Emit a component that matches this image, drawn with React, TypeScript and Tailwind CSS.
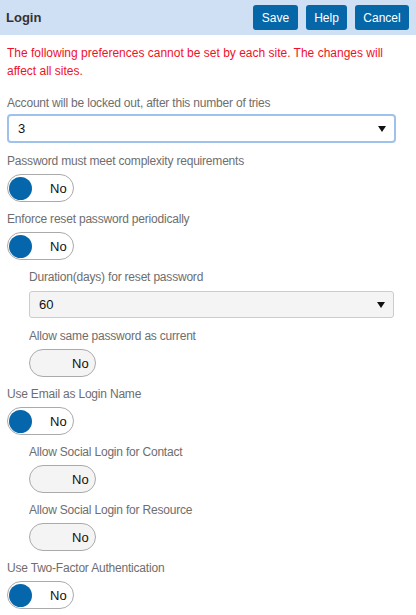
import React from "react";

const Arrow = () => (
  <svg width="8" height="6" viewBox="0 0 8 6" className="shrink-0">
    <path d="M0 0 L8 0 L4 6 Z" fill="#111" />
  </svg>
);

const Toggle = ({ knob }: { knob: boolean }) => (
  <div
    className={`relative flex h-[28px] w-[67px] items-center rounded-full border border-[#aaaaaa] ${
      knob ? "bg-white" : "bg-[#f4f4f4]"
    }`}
  >
    {knob && <div className="absolute left-[1px] top-[2px] h-[23px] w-[23px] rounded-full bg-[#0566ab]" />}
    <span className="absolute left-[42px] text-[13px] leading-none text-[#111]">No</span>
  </div>
);

const Label = ({ children }: { children: React.ReactNode }) => (
  <div className="h-[16px] text-[12px] leading-[16px] tracking-[-0.2px] text-[#6e6e6e]">{children}</div>
);

const ToggleBlock = ({ label, knob }: { label: string; knob: boolean }) => (
  <div className="flex flex-col pb-[9px]">
    <Label>{label}</Label>
    <div className="mt-[5px]">
      <Toggle knob={knob} />
    </div>
  </div>
);

export default function App() {
  return (
    <div
      className="h-[615px] w-[416px] overflow-hidden bg-white"
      style={{ fontFamily: '"Liberation Sans", Arial, sans-serif' }}
    >
      <div className="flex h-[35px] items-center justify-between bg-[#cfe0f5] pl-[6px] pr-[7px]">
        <div className="text-[13px] font-bold text-[#333]">Login</div>
        <div className="flex gap-[8px]">
          <button className="h-[25px] w-[45px] rounded-[3px] bg-[#0566a8] text-[12px] text-white">Save</button>
          <button className="h-[25px] w-[41px] rounded-[3px] bg-[#0566a8] text-[12px] text-white">Help</button>
          <button className="h-[25px] w-[54px] rounded-[3px] bg-[#0566a8] text-[12px] text-white">Cancel</button>
        </div>
      </div>
      <div className="px-[7px] pt-[9px]">
        <div className="max-w-[376px] text-[12px] leading-[18px] text-[#f0102a]">
          The following preferences cannot be set by each site. The changes will affect all sites.
        </div>
        <div className="mt-[15px] flex flex-col">
          <Label>Account will be locked out, after this number of tries</Label>
          <div className="mt-[3px] mb-[10px] flex h-[29px] w-[389px] items-center justify-between rounded-[4px] border-2 border-[#9fc2ec] bg-white pl-[9px] pr-[8px]">
            <span className="text-[13px] text-[#111]">3</span>
            <Arrow />
          </div>
        </div>
        <ToggleBlock label="Password must meet complexity requirements" knob />
        <ToggleBlock label="Enforce reset password periodically" knob />
        <div className="pl-[22px]">
          <div className="flex flex-col">
            <Label>Duration(days) for reset password</Label>
            <div className="mt-[6px] mb-[10px] flex h-[27px] w-[365px] items-center justify-between rounded-[3px] border border-[#cccccc] bg-[#f4f4f4] pl-[9px] pr-[8px]">
              <span className="text-[13px] text-[#111]">60</span>
              <Arrow />
            </div>
          </div>
          <ToggleBlock label="Allow same password as current" knob={false} />
        </div>
        <ToggleBlock label="Use Email as Login Name" knob />
        <div className="pl-[22px]">
          <ToggleBlock label="Allow Social Login for Contact" knob={false} />
          <ToggleBlock label="Allow Social Login for Resource" knob={false} />
        </div>
        <ToggleBlock label="Use Two-Factor Authentication" knob />
      </div>
    </div>
  );
}
